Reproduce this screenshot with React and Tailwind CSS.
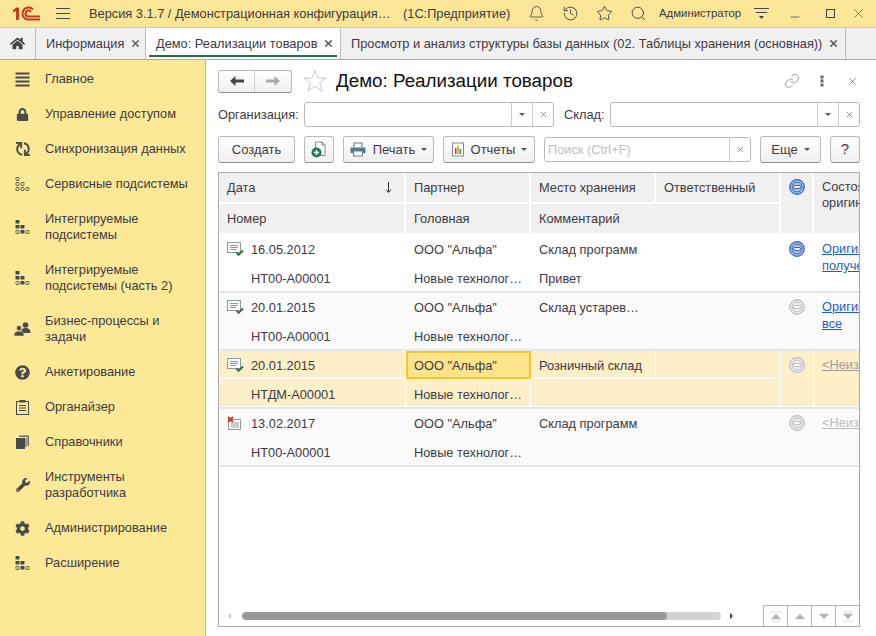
import React from 'react'
import { FaHome, FaLock, FaSync, FaQuestionCircle, FaWrench, FaCog } from 'react-icons/fa'
import { Bell, History, Star, Search, X, Link as LinkIcon, Minus } from 'lucide-react'

const ink = 'text-[#3f3a44]'

function Logo() {
	return (
		<svg width="30" height="15" viewBox="0 0 30 15" fill="none">
			<path d="M1 4 L4.5 1.5 H7 V14 H4 V5 L1 6.5 Z" fill="#c9381c" />
			<path d="M28 13.5 H16 A6 6 0 1 1 21 3.5" stroke="#c9381c" strokeWidth="2" />
			<path d="M28 10.5 H16 A3 3 0 1 1 19 6" stroke="#c9381c" strokeWidth="2" />
		</svg>
	)
}

function Lines() {
	return (
		<svg width="16" height="14" viewBox="0 0 16 14" stroke="#4a4a4a" strokeWidth="1">
			<path d="M1 1.5H15M1 6.5H15M1 11.5H15" />
		</svg>
	)
}

function BlocksIcon({ filled }) {
	const cells = [[0, 0], [0, 5], [5, 5], [0, 10], [5, 10], [10, 10]]
	return (
		<svg width="15" height="14" viewBox="0 0 15 14">
			{cells.map(([x, y], i) => {
				const solid = filled && i !== 3 && i !== 5
				return solid
					? <rect key={i} x={x + 0.5} y={y} width="4" height="3.5" rx="0.6" fill="#4a4a4a" />
					: <rect key={i} x={x + 1} y={y + 0.5} width="3" height="3" rx="0.8" fill="none" stroke="#4a4a4a" strokeWidth="0.9" />
			})}
		</svg>
	)
}

function MenuIcon() {
	return (
		<svg width="15" height="15" viewBox="0 0 15 15" fill="#4a4a4a">
			<rect x="0.5" y="0.5" width="14" height="2" />
			<rect x="0.5" y="4.5" width="14" height="2" />
			<rect x="0.5" y="8.5" width="14" height="2" />
			<rect x="0.5" y="12.5" width="14" height="2" />
		</svg>
	)
}

function PeopleIcon() {
	return (
		<svg width="17" height="14" viewBox="0 0 17 14" fill="#4a4a4a">
			<circle cx="11.5" cy="3" r="2.8" />
			<path d="M7 10c0-2.5 2-4 4.500-4s5 1.500 5 4v1H7z" />
			<circle cx="5" cy="6" r="2.600" stroke="#fbe998" strokeWidth="0.6" />
			<path d="M0 13c0-2.500 2-4 5-4s5 1.500 5 4v1H0z" stroke="#fbe998" strokeWidth="0.6" />
		</svg>
	)
}

function ClipIcon() {
	return (
		<svg width="13" height="15" viewBox="0 0 13 15" fill="none" stroke="#4a4a4a" strokeWidth="1">
			<rect x="0.500" y="1.500" width="12" height="13" />
			<rect x="3.500" y="0" width="6" height="2.500" fill="#4a4a4a" stroke="none" />
			<path d="M3 5.500H10M3 8H10M3 10.500H10" />
		</svg>
	)
}

function BooksIcon() {
	return (
		<svg width="13" height="14" viewBox="0 0 13 14" fill="#4a4a4a">
			<rect x="0" y="3" width="9" height="11" />
			<path d="M3 2V0.500H13V11H11.500V2Z" opacity="0.8" />
			<path d="M10 3V12" stroke="#4a4a4a" strokeWidth="1" />
		</svg>
	)
}

const menu = [
	{ label: 'Главное', icon: <MenuIcon /> },
	{ label: 'Управление доступом', icon: <FaLock size={13} color="#4a4a4a" /> },
	{ label: 'Синхронизация данных', icon: <FaSync size={14} color="#4a4a4a" className="rotate-90" /> },
	{ label: 'Сервисные подсистемы', icon: <BlocksIcon /> },
	{ label: ['Интегрируемые', 'подсистемы'], icon: <BlocksIcon filled /> },
	{ label: ['Интегрируемые', 'подсистемы (часть 2)'], icon: <BlocksIcon filled /> },
	{ label: ['Бизнес-процессы и', 'задачи'], icon: <PeopleIcon /> },
	{ label: 'Анкетирование', icon: <FaQuestionCircle size={15} color="#4a4a4a" /> },
	{ label: 'Органайзер', icon: <ClipIcon /> },
	{ label: 'Справочники', icon: <BooksIcon /> },
	{ label: ['Инструменты', 'разработчика'], icon: <FaWrench size={14} color="#4a4a4a" /> },
	{ label: 'Администрирование', icon: <FaCog size={15} color="#4a4a4a" /> },
	{ label: 'Расширение', icon: <BlocksIcon filled /> },
]

function Sidebar() {
	return (
		<aside className="w-[206px] shrink-0 bg-[#fbe998] border-r border-[#b5b5a5] pt-px">
			{menu.map((m, i) => (
				<div key={i} className="flex items-center pt-[10px] pb-[9px]">
					<div className="w-[46px] flex justify-center pr-[1px] shrink-0">{m.icon}</div>
					<div className={`leading-4 -ml-px ${ink}`}>
						{Array.isArray(m.label) ? m.label.map(l => <div key={l}>{l}</div>) : m.label}
					</div>
				</div>
			))}
		</aside>
	)
}

function TitleBar() {
	return (
		<header className={`h-[28px] shrink-0 bg-[#fbe698] border-b border-[#d8c98a] flex items-center ${ink}`}>
			<div className="ml-[12px] w-[43px]"><Logo /></div>
			<Lines />
			<span className="ml-[18px] w-[314px] whitespace-nowrap">Версия 3.1.7 / Демонстрационная конфигурация…</span>
			<span className="w-[125px] whitespace-nowrap">(1С:Предприятие)</span>
			<Bell size={17} strokeWidth={1.2} color="#444" />
			<History size={17} strokeWidth={1.3} color="#444" className="ml-[17px]" />
			<Star size={17} strokeWidth={1.3} color="#444" className="ml-[17px]" />
			<Search size={17} strokeWidth={1.3} color="#444" className="ml-[17px]" />
			<span className="ml-[12px] w-[95px] text-[11.4px] whitespace-nowrap">Администратор</span>
			<svg width="16" height="14" viewBox="0 0 16 14" stroke="#444" className="mr-[18px]">
				<path d="M0 1.500H15M2 5.500H13" />
				<path d="M5 9H10L7.500 12Z" fill="#444" stroke="none" />
			</svg>
			<Minus size={14} strokeWidth={1.2} color="#444" className="mt-[6px]" />
			<div className="ml-[24px] w-[9px] h-[9px] border border-[#444]" />
			<X size={15} strokeWidth={1} color="#444" className="ml-[16px]" />
		</header>
	)
}

function TabBar() {
	return (
		<nav className={`h-[32px] shrink-0 bg-[#f0f0f0] border-b border-[#a9a9a9] flex ${ink}`}>
			<div className="w-[36px] border-r border-[#bdbdbd] flex items-center justify-center pr-[1px]">
				<FaHome size={15} color="#444" />
			</div>
			<div className="w-[110px] border-r border-[#bdbdbd] flex items-center pl-[10px]">
				<span>Информация</span>
				<X size={11} strokeWidth={3} color="#555" className="ml-[6px]" />
			</div>
			<div className="w-[195px] bg-white border-r border-[#bdbdbd] relative flex items-center pl-[10px]">
				<span>Демо: Реализации товаров</span>
				<X size={11} strokeWidth={3} color="#555" className="ml-[6px]" />
				<div className="absolute left-[3px] right-[3px] bottom-[2px] h-[2px] bg-[#1f6f4a]" />
			</div>
			<div className="w-[505px] border-r border-[#bdbdbd] flex items-center pl-[10px]">
				<span className="whitespace-nowrap">Просмотр и анализ структуры базы данных (02. Таблицы хранения (основная))</span>
				<X size={11} strokeWidth={3} color="#555" className="ml-[6px]" />
			</div>
		</nav>
	)
}

function Btn({ children, className = '' }) {
	return (
		<div className={`h-[27px] flex items-center justify-center rounded-[3px] border border-[#b9b9b9] border-b-[#8f8f8f] bg-linear-to-b from-white to-[#efefef] text-[13px] ${ink} ${className}`}>
			{children}
		</div>
	)
}

function Caret() {
	return <span className="ml-[6px] w-0 h-0 border-l-[3px] border-r-[3px] border-t-[3px] border-transparent border-t-[#555] inline-block" />
}

function Caret2() {
	return <span className="w-0 h-0 border-l-[3px] border-r-[3px] border-t-[3px] border-transparent border-t-[#555] inline-block" />
}

function Field({ className }) {
	return (
		<div className={`h-[25px] flex rounded-[3px] border border-[#b9b9b9] ${className}`}>
			<div className="flex-1" />
			<div className="w-[21px] border-l border-[#c9c9c9] flex items-center justify-center"><Caret2 /></div>
			<div className="w-[21px] border-l border-[#c9c9c9] flex items-center justify-center"><X size={9} strokeWidth={1.6} color="#555" /></div>
		</div>
	)
}

function NewDocIcon() {
	return (
		<svg width="16" height="17" viewBox="0 0 16 17" fill="none">
			<path d="M4.500 1H11L14 4V14.500H4.500Z" fill="#fff" stroke="#7c8a8a" />
			<path d="M11 1V4H14" stroke="#7c8a8a" />
			<circle cx="5.500" cy="11.500" r="5" fill="#1f7a4d" />
			<path d="M3 11.500H8M5.500 9V14" stroke="#fff" strokeWidth="1.500" />
		</svg>
	)
}

function PrintIcon() {
	return (
		<svg width="16" height="15" viewBox="0 0 16 15" fill="none" className="mr-[7px]">
			<path d="M4 5V1H12V5" fill="#fff" stroke="#6d7f8a" strokeWidth="1.200" />
			<path d="M0.500 5.500H15.500V11H0.500Z" fill="#4f7a95" />
			<rect x="3.500" y="9" width="9" height="5" fill="#fff" stroke="#6d7f8a" />
		</svg>
	)
}

function ReportIcon() {
	return (
		<svg width="14" height="15" viewBox="0 0 14 15" fill="none">
			<rect x="1.500" y="1" width="11" height="13" fill="#fff" stroke="#8a8a8a" />
			<rect x="4" y="6" width="1.500" height="6" fill="#c0392b" />
			<rect x="6.300" y="4" width="1.500" height="8" fill="#d69a1e" />
			<rect x="8.600" y="7" width="1.500" height="5" fill="#2a8a55" />
		</svg>
	)
}

function DocCheck({ cancelled }) {
	return (
		<svg width="18" height="16" viewBox="0 0 18 16" fill="none">
			<rect x={cancelled ? 1.500 : 0.500} y={cancelled ? 3.500 : 0.500} width={cancelled ? 12 : 13} height="10" fill="#fff" stroke="#8f9a9a" />
			<path d={cancelled ? 'M4 7H12M4 9H12M4 11H12' : 'M3 3.500H11M3 5.500H11M3 7.500H9'} stroke="#8f9a9a" />
			{cancelled
				? <path d="M1 1L6 6M6 1L1 6" stroke="#c8402a" strokeWidth="2" />
				: <path d="M9.500 10.500L11.500 13L16 8.500" stroke="#1f6f4a" strokeWidth="1.800" />}
		</svg>
	)
}

function RoundIcon({ active }) {
	const c = active ? '#3a5fc0' : '#bdbdbd'
	return (
		<svg width="16" height="16" viewBox="0 0 16 16" fill="none">
			<circle cx="8" cy="8" r="7.300" stroke={c} strokeWidth="1.200" fill={active ? '#a9c4ec' : '#eeeeee'} />
			<circle cx="8" cy="8" r="5" stroke={c} strokeWidth="1" />
			<rect x="4.500" y="6.500" width="7" height="3" rx="1.500" fill="#fff" stroke={c} />
		</svg>
	)
}

const rows = [
	{ date: '16.05.2012', num: 'НТ00-А00001', place: 'Склад программ', comment: 'Привет', active: true, state: ['Оригиналы', 'получены'], link: 'blue', bg: 'bg-white' },
	{ date: '20.01.2015', num: 'НТ00-А00001', place: 'Склад устарев…', comment: '', state: ['Оригиналы', 'все'], link: 'blue', bg: 'bg-[#fafafa]' },
	{ date: '20.01.2015', num: 'НТДМ-А00001', place: 'Розничный склад', comment: '', state: ['<Неизвестно>'], link: 'gray', bg: 'bg-[#fdf0c8]', selected: true },
	{ date: '13.02.2017', num: 'НТ00-А00001', place: 'Склад программ', comment: '', state: ['<Неизвестно>'], link: 'light', bg: 'bg-[#fafafa]', cancelled: true },
]

const colTemplate = 'grid grid-cols-[187px_125px_125px_125px_33px_100px]'

function Row({ r }) {
	const line = r.selected ? 'border-white' : 'border-transparent'
	const cell = `border-r border-b ${line} flex items-center pl-[8px] whitespace-nowrap overflow-hidden`
	const linkColor = r.link === 'blue' ? 'text-[#1f5fc4]' : r.link === 'gray' ? 'text-[#9c9c9c]' : 'text-[#bdbdbd]'
	return (
		<div className={`${colTemplate} grid-rows-[28px_28px] shrink-0 w-[695px] border-b-2 border-[#e6e6e6] ${r.bg} ${ink}`}>
			<div className={`${cell} pt-[2px]`}>
				<DocCheck cancelled={r.cancelled} />
				<span className="ml-[6px]">{r.date}</span>
			</div>
			<div className={`${cell} ${r.selected ? '!border-2 !border-[#f5c62c] bg-[#fce38c] !pl-[6px] pt-[1px]' : 'pt-[2px]'}`}>ООО "Альфа"</div>
			<div className={`${cell} pt-[2px]`}>{r.place}</div>
			<div className={cell} />
			<div className={`${cell} row-span-2 !items-start justify-center !pl-0 pt-[6px]`}><RoundIcon active={r.active} /></div>
			<div className={`${cell} row-span-2 !block pt-[6px] leading-4 underline ${linkColor}`}>
				{r.state.map(s => <div key={s} className="mb-px">{s}</div>)}
			</div>
			<div className={`${cell} !pl-[32px] pt-[4px]`}>{r.num}</div>
			<div className={`${cell} pt-[4px]`}>Новые технолог…</div>
			<div className={`${cell} col-span-2 pt-[4px]`}>{r.comment}</div>
		</div>
	)
}

function TableHead() {
	const c = 'bg-[#f0f0f0] border-r-2 border-b-2 border-white pl-[8px] flex items-center whitespace-nowrap overflow-hidden'
	return (
		<div className={`${colTemplate} grid-rows-[31px_31px] shrink-0 w-[695px] ${ink}`}>
			<div className={`${c} justify-between pr-[12px]`}>
				<span>Дата</span>
				<svg width="7" height="11" viewBox="0 0 7 11" fill="none" stroke="#333" strokeWidth="1">
					<path d="M3.500 0V10M1 7.500L3.500 10.500L6 7.500" />
				</svg>
			</div>
			<div className={c}>Партнер</div>
			<div className={c}>Место хранения</div>
			<div className={c}>Ответственный</div>
			<div className={`${c} row-span-2 !items-start justify-center !pl-0 pt-[6px]`}><RoundIcon active /></div>
			<div className={`${c} row-span-2 !block pt-[6px] leading-4`}>
				<div>Состояние</div>
				<div>оригинала</div>
			</div>
			<div className={c}>Номер</div>
			<div className={c}>Головная</div>
			<div className={`${c} col-span-2`}>Комментарий</div>
		</div>
	)
}

function Pager() {
	const paths = ['M2 1H12M7 3L2.500 8H11.500ZM2 10H12', 'M2.500 8H11.500L7 3Z', 'M2.500 3H11.500L7 8Z', 'M2 1H12M2.500 3H11.500L7 8ZM2 10H12']
	return (
		<div className="flex shrink-0">
			{paths.map((d, i) => (
				<div key={i} className="w-[24px] h-[21px] border-t border-l border-[#b5b5b5] flex items-center justify-center">
					<svg width="14" height="11" viewBox="0 0 14 11" fill="#b5b5b5" stroke="#b5b5b5" strokeWidth="0.500"><path d={d} /></svg>
				</div>
			))}
		</div>
	)
}

function DataTable() {
	return (
		<div className="w-[642px] h-[455px] mt-[9px] border border-[#a9a9a9] flex flex-col overflow-hidden">
			<TableHead />
			{rows.map((r, i) => <Row key={i} r={r} />)}
			<div className="mt-auto flex items-end">
				<div className="flex-1 flex items-center h-[21px] pl-[9px]">
					<span className="w-0 h-0 border-y-[3px] border-r-[3px] border-transparent border-r-[#c4c4c4]" />
					<div className="ml-[11px] w-[479px] h-[8px] rounded-full bg-[#d3d3d3] overflow-hidden">
						<div className="h-full w-[425px] rounded-full bg-[#999999]" />
					</div>
					<span className="ml-[9px] w-0 h-0 border-y-[3px] border-l-[3px] border-transparent border-l-[#444]" />
				</div>
				<Pager />
			</div>
		</div>
	)
}

function Content() {
	return (
		<main className={`flex-1 bg-white pl-[12px] pt-[9px] min-w-0 ${ink}`}>
			<div className="flex items-center h-[24px]">
				<div className="w-[74px] h-[23px] flex rounded-[3px] border border-[#b9b9b9] border-b-[#8f8f8f] bg-linear-to-b from-white to-[#efefef]">
					<div className="w-[36px] border-r border-[#d0d0d0] flex items-center justify-center">
						<svg width="14" height="10" viewBox="0 0 14 10" fill="#444"><path d="M0 5L5.500 0V3.500H14V6.500H5.500V10Z" /></svg>
					</div>
					<div className="flex-1 flex items-center justify-center">
						<svg width="14" height="10" viewBox="0 0 14 10" fill="#a8a8a8"><path d="M14 5L8.500 0V3.500H0V6.500H8.500V10Z" /></svg>
					</div>
				</div>
				<svg width="24" height="24" viewBox="0 0 24 24" fill="none" stroke="#c9c9c9" strokeWidth="1" className="ml-[11px]">
					<path d="M12 1.500L15 9H23L16.700 14L19 22L12 17.300L5 22L7.300 14L1 9H9Z" />
				</svg>
				<h1 className="ml-[9px] text-[18.800px] leading-6 text-[#111] whitespace-nowrap">Демо: Реализации товаров</h1>
				<LinkIcon size={16} strokeWidth={1.2} color="#888" className="ml-[211px]" />
				<svg width="4" height="12" viewBox="0 0 4 12" fill="#666" className="ml-[20px]">
					<rect x="0.500" y="0.500" width="3" height="3" /><rect x="0.500" y="4.500" width="3" height="3" /><rect x="0.500" y="8.500" width="3" height="3" />
				</svg>
				<X size={11} strokeWidth={1.400} color="#555" className="ml-[23px]" />
			</div>
			<div className="flex items-center mt-[9px]">
				<span className="w-[86px]">Организация:</span>
				<Field className="w-[250px]" />
				<span className="ml-[10px] w-[46px]">Склад:</span>
				<Field className="w-[250px]" />
			</div>
			<div className="flex items-center mt-[9px]">
				<Btn className="w-[77px]">Создать</Btn>
				<Btn className="w-[30px] ml-[9px]"><NewDocIcon /></Btn>
				<Btn className="w-[91px] ml-[9px]">
					<PrintIcon />Печать<Caret />
				</Btn>
				<Btn className="w-[92px] ml-[9px]">
					<ReportIcon /><span className="ml-[6px]">Отчеты</span><Caret />
				</Btn>
				<div className="w-[207px] h-[25px] ml-[9px] flex border border-[#b9b9b9] rounded-[3px]">
					<div className="flex-1 pl-[3px] flex items-center text-[#c0c0c0]">Поиск (Ctrl+F)</div>
					<div className="w-[21px] border-l border-[#c9c9c9] flex items-center justify-center"><X size={9} strokeWidth={1.6} color="#555" /></div>
				</div>
				<Btn className="w-[61px] ml-[9px]">Еще<Caret /></Btn>
				<Btn className="w-[30px] ml-[9px] !text-[15px]">?</Btn>
			</div>
			<DataTable />
		</main>
	)
}

export default function App() {
	return (
		<div className="w-[876px] h-[636px] flex flex-col overflow-hidden bg-white text-[12.800px] font-['Liberation_Sans',Arial,sans-serif]">
			<TitleBar />
			<TabBar />
			<div className="flex flex-1 min-h-0">
				<Sidebar />
				<Content />
			</div>
		</div>
	)
}
